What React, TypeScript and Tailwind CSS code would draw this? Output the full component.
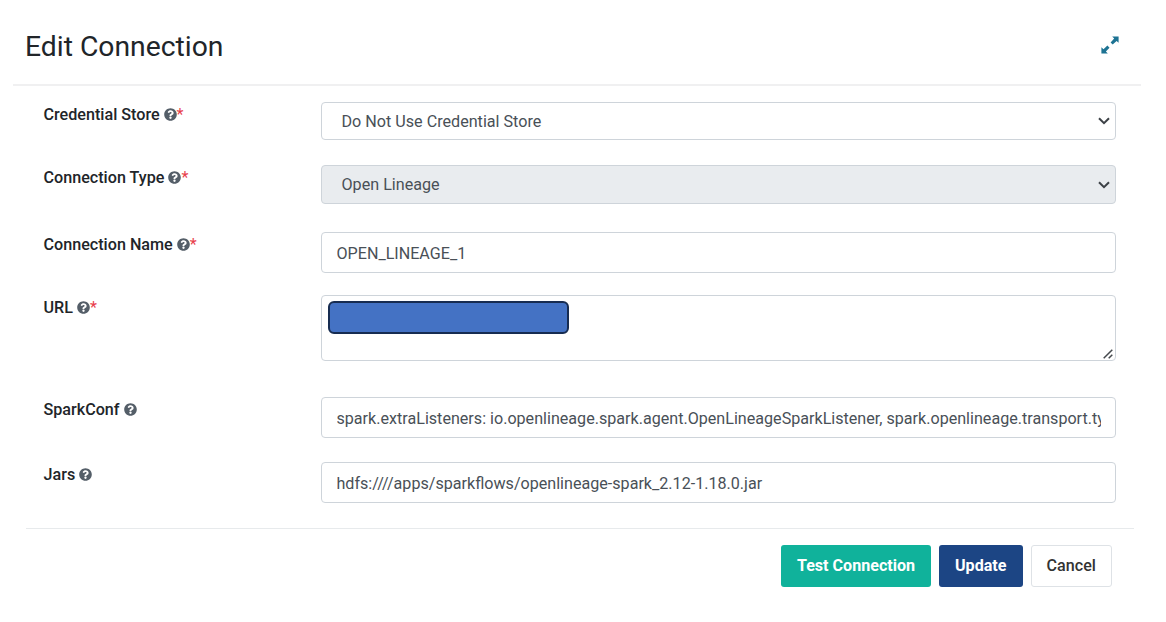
import type { ReactNode } from "react";
import { FaQuestionCircle } from "react-icons/fa";

function Row({ label, required, className, children }: { label: string; required?: boolean; className: string; children: ReactNode }) {
  return (
    <div className={`flex items-start pl-[43.5px] pr-[50px] ${className}`}>
      <label className="flex h-[26px] w-[277.5px] shrink-0 items-center text-[16.15px] font-medium leading-6 text-[#212529]">
        <span>{label}</span>
        <FaQuestionCircle className="mb-[2px] ml-[4px] size-[13px] text-[#545e68]" />
        {required && <span className="font-normal text-[#e83e4c]">*</span>}
      </label>
      {children}
    </div>
  );
}

function SelectBox({ value, className }: { value: string; className: string }) {
  return (
    <div className={`flex w-[795px] items-center justify-between rounded-[4px] border border-[#ced4da] pl-[19.5px] pr-[5px] text-[16.15px] text-[#495057] ${className}`}>
      <span className="pt-[2px]">{value}</span>
      <svg className="h-[8px] w-[12px]" viewBox="0 0 12 8" fill="none" stroke="#3c4146" strokeWidth="2">
        <path d="M1 1.2 6 6.2 11 1.2" />
      </svg>
    </div>
  );
}

function TextBox({ value }: { value: string }) {
  return (
    <div className="flex h-[41px] w-[795px] items-center rounded-[4px] border border-[#ced4da] pl-[14.5px] pr-[14px] text-[16.12px] text-[#495057]">
      <div className="w-full overflow-hidden whitespace-nowrap pt-[3px]">{value}</div>
    </div>
  );
}

export default function App() {
  return (
    <div className="h-[622px] w-[1166px] overflow-hidden bg-white font-['Roboto',sans-serif]">
      <header className="ml-[13px] mr-[25px] flex h-[86px] items-center justify-between border-b-2 border-[#f0f0f1] pl-[12px] pr-[22.5px] pt-[6px]">
        <h1 className="pt-[3px] text-[28.3px] font-normal leading-9 text-[#212529]">Edit Connection</h1>
        <svg className="size-[18px]" viewBox="0 0 18 18" fill="#1d7393">
          <path d="M11.2 0.4H17.6V6.8L15.6 4.9 11.7 8.5 9.6 6.4 13.2 2.5Z" />
          <path d="M6.8 17.6H0.4V11.2L2.5 13.2 6.4 9.6 8.5 11.7 4.9 15.6Z" />
        </svg>
      </header>

      <Row label="Credential Store" required className="mt-4">
        <SelectBox value="Do Not Use Credential Store" className="h-[38px]" />
      </Row>
      <Row label="Connection Type" required className="mt-[25px]">
        <SelectBox value="Open Lineage" className="h-[39px] bg-[#e9ecef]" />
      </Row>
      <Row label="Connection Name" required className="mt-[28px]">
        <TextBox value="OPEN_LINEAGE_1" />
      </Row>
      <Row label="URL" required className="mt-[22px]">
        <div className="flex h-[66px] w-[795px] items-start justify-between rounded-[4px] border border-[#ced4da] pl-[6.4px] pt-[5.4px]">
          <div className="h-[33px] w-[241px] rounded-[6px] border-2 border-[#172c51] bg-[#4472c4]" />
          <svg className="mb-[1px] mr-[2px] size-[10px] self-end" viewBox="0 0 10 10" fill="none" stroke="#45494d" strokeWidth="1.5">
            <path d="M0.7 9.3 9.3 0.7M5.7 9.3 9.3 5.7" />
          </svg>
        </div>
      </Row>
      <Row label="SparkConf" className="mt-[36px]">
        <TextBox value="spark.extraListeners: io.openlineage.spark.agent.OpenLineageSparkListener, spark.openlineage.transport.type: http" />
      </Row>
      <Row label="Jars" className="mt-6">
        <TextBox value="hdfs:////apps/sparkflows/openlineage-spark_2.12-1.18.0.jar" />
      </Row>

      <footer className="ml-[26px] mr-[32px] mt-[25px] flex justify-end gap-2 border-t border-[#e7eaec] pr-[22px] pt-4 text-[16.1px]">
        <button className="h-[42px] w-[150px] rounded-[3px] bg-[#10b29b] font-bold text-white">Test Connection</button>
        <button className="h-[42px] w-[83.5px] rounded-[3px] bg-[#1c4584] font-bold text-white">Update</button>
        <button className="h-[42px] w-[81.5px] rounded-[3px] border border-[#dee2e6] bg-white font-medium text-[#333333]">Cancel</button>
      </footer>
    </div>
  );
}
